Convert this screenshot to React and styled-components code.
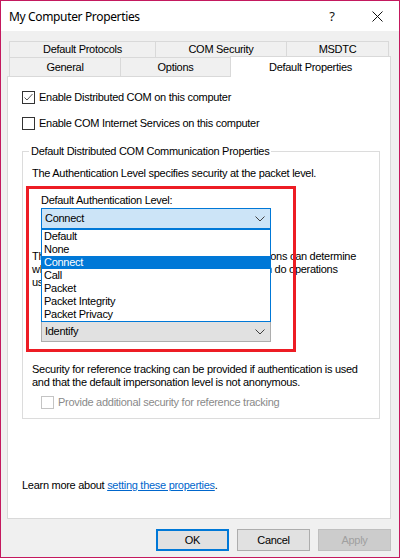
import React from "react";
import styled, { createGlobalStyle } from "styled-components";

const GlobalStyle = createGlobalStyle`
  body {
    margin: 0;
    font-family: "Liberation Sans", Arial, sans-serif;
    font-size: 11px;
    letter-spacing: -0.28px;
    color: #000;
  }
`;

const Window = styled.div`
  width: 400px;
  height: 558px;
  box-sizing: border-box;
  border: 1px solid #c4195e;
  background: #f0f0f0;
  display: flex;
  flex-direction: column;
`;

const TitleBar = styled.div`
  height: 30px;
  background: #fff;
  display: flex;
  align-items: center;
  padding-left: 8px;
  flex-shrink: 0;
`;

const Title = styled.div`
  font-family: "Noto Sans", "Open Sans", sans-serif;
  font-size: 12px;
  letter-spacing: -0.35px;
  flex: 1;
`;

const TitleButton = styled.div`
  width: ${p => p.$w}px;
  height: 30px;
  display: flex;
  align-items: center;
  justify-content: center;
  font-family: "Noto Sans", sans-serif;
  font-size: 13px;
  color: #111;
`;

const Body = styled.div`
  flex: 1;
  display: flex;
  flex-direction: column;
  padding: 10px 8px 0 6px;
`;

const TabRow = styled.div`
  display: flex;
  align-items: flex-end;
  height: ${p => p.$h}px;
  padding-left: 2px;
`;

const Tab = styled.div`
  box-sizing: border-box;
  width: ${p => p.$w}px;
  height: ${p => (p.$active ? p.$h + 2 : p.$h)}px;
  margin-left: -1px;
  margin-bottom: ${p => (p.$active ? -1 : 0)}px;
  border: 1px solid #d9d9d9;
  border-bottom: none;
  background: ${p => (p.$active ? "#fff" : "#f0f0f0")};
  display: flex;
  align-items: center;
  justify-content: center;
  line-height: 13px;
  position: relative;
  z-index: ${p => (p.$active ? 1 : 0)};
  &:first-child {
    margin-left: 0;
  }
`;

const Panel = styled.div`
  box-sizing: border-box;
  width: 384px;
  height: 443px;
  border: 1px solid #d9d9d9;
  background: #fff;
  padding: 14px 14px 0 14px;
  display: flex;
  flex-direction: column;
`;

const CheckRow = styled.label`
  display: flex;
  align-items: center;
  gap: 4px;
  height: 13px;
  line-height: 13px;
  margin-top: ${p => p.$mt || 0}px;
  margin-left: ${p => p.$ml || 0}px;
  color: ${p => (p.$disabled ? "#8a8a8a" : "#000")};
`;

const Box = styled.span`
  box-sizing: border-box;
  width: 13px;
  height: 13px;
  border: 1px solid ${p => (p.$disabled ? "#c4c4c4" : "#333")};
  background: #fff;
  display: flex;
  align-items: center;
  justify-content: center;
`;

const Group = styled.fieldset`
  box-sizing: border-box;
  width: 358px;
  margin: 15px 0 0 0;
  padding: 0 9px 9px 9px;
  border: 1px solid #dcdcdc;
  min-width: 0;
`;

const Legend = styled.legend`
  padding: 0 2px;
  margin-left: -3px;
  line-height: 13px;
`;

const Text = styled.div`
  line-height: 13px;
  margin-top: ${p => p.$mt || 0}px;
  margin-left: ${p => p.$ml || 0}px;
  white-space: nowrap;
`;

const AuthSection = styled.div`
  position: relative;
  margin-top: 14px;
`;

const Combo = styled.div`
  position: relative;
  box-sizing: border-box;
  width: 230px;
  height: 21px;
  margin-left: 9px;
  margin-top: ${p => p.$mt || 0}px;
  border: 1px solid ${p => (p.$focused ? "#0078d7" : "#adadad")};
  background: ${p => (p.$focused ? "#cce4f7" : "#e1e1e1")};
  display: flex;
  align-items: center;
  padding: 0 5px 0 3px;
  line-height: 13px;
`;

const ComboValue = styled.span`
  flex: 1;
`;

const DropList = styled.div`
  position: absolute;
  top: 20px;
  left: -1px;
  width: 230px;
  box-sizing: border-box;
  border: 1px solid #0078d7;
  background: #fff;
  z-index: 3;
`;

const Option = styled.div`
  height: 13px;
  line-height: 13px;
  padding-left: 2px;
  background: ${p => (p.$selected ? "#0078d7" : "#fff")};
  color: ${p => (p.$selected ? "#fff" : "#000")};
`;

const Highlight = styled.div`
  position: absolute;
  top: -8px;
  left: -6px;
  width: 270px;
  height: 166px;
  box-sizing: border-box;
  border: 3px solid #ed1c24;
  pointer-events: none;
  z-index: 4;
`;

const LearnMore = styled.div`
  margin-top: 60px;
  line-height: 13px;
`;

const Link = styled.a`
  color: #0066cc;
  text-decoration: underline;
`;

const ButtonRow = styled.div`
  display: flex;
  justify-content: flex-end;
  gap: 8px;
  margin-top: 10px;
`;

const Button = styled.div`
  box-sizing: border-box;
  width: 73px;
  height: 22px;
  display: flex;
  align-items: center;
  justify-content: center;
  background: ${p => (p.$disabled ? "#cccccc" : "#e1e1e1")};
  border: ${p =>
    p.$default ? "2px solid #0078d7" : p.$disabled ? "1px solid #bfbfbf" : "1px solid #adadad"};
  color: ${p => (p.$disabled ? "#a0a0a0" : "#000")};
`;

const Chevron = () => (
  <svg width="10" height="6" viewBox="0 0 10 6">
    <path d="M0.5 0.5 L5 5 L9.5 0.5" fill="none" stroke="#404040" strokeWidth="1" />
  </svg>
);

const Check = () => (
  <svg width="11" height="11" viewBox="0 0 11 11">
    <path d="M1.5 5.5 L4 8 L9.5 2" fill="none" stroke="#555" strokeWidth="1" />
  </svg>
);

const levels = ["Default", "None", "Connect", "Call", "Packet", "Packet Integrity", "Packet Privacy"];

export default function App() {
  return (
    <>
      <GlobalStyle />
      <Window>
        <TitleBar>
          <Title>My Computer Properties</Title>
          <TitleButton $w={46}>?</TitleButton>
          <TitleButton $w={44}>
            <svg width="11" height="11" viewBox="0 0 11 11">
              <path d="M0.5 0.5 L10.5 10.5 M10.5 0.5 L0.5 10.5" stroke="#111" strokeWidth="1" />
            </svg>
          </TitleButton>
        </TitleBar>
        <Body>
          <TabRow $h={16}>
            <Tab $w={147} $h={16}>Default Protocols</Tab>
            <Tab $w={132} $h={16}>COM Security</Tab>
            <Tab $w={103} $h={16}>MSDTC</Tab>
          </TabRow>
          <TabRow $h={19}>
            <Tab $w={112} $h={19}>General</Tab>
            <Tab $w={111} $h={19}>Options</Tab>
            <Tab $w={161} $h={19} $active>Default Properties</Tab>
          </TabRow>
          <Panel>
            <CheckRow>
              <Box><Check /></Box>
              Enable Distributed COM on this computer
            </CheckRow>
            <CheckRow $mt={13}>
              <Box />
              Enable COM Internet Services on this computer
            </CheckRow>
            <Group>
              <Legend>Default Distributed COM Communication Properties</Legend>
              <Text $mt={9}>The Authentication Level specifies security at the packet level.</Text>
              <AuthSection>
                <Text $ml={9}>Default Authentication Level:</Text>
                <Combo $mt={1} $focused>
                  <ComboValue>Connect</ComboValue>
                  <Chevron />
                  <DropList>
                    {levels.map(l => (
                      <Option key={l} $selected={l === "Connect"}>{l}</Option>
                    ))}
                  </DropList>
                </Combo>
                <Text $mt={21}>
                  The Impersonation Level specifies whether applications can determine
                  <br />
                  who is calling them, and whether the application can do operations
                  <br />
                  using the client's identity.
                </Text>
                <Text $mt={18} $ml={9}>Default Impersonation Level:</Text>
                <Combo $mt={1}>
                  <ComboValue>Identify</ComboValue>
                  <Chevron />
                </Combo>
                <Highlight />
              </AuthSection>
              <Text $mt={21}>
                Security for reference tracking can be provided if authentication is used
                <br />
                and that the default impersonation level is not anonymous.
              </Text>
              <CheckRow $mt={7} $ml={9} $disabled>
                <Box $disabled />
                Provide additional security for reference tracking
              </CheckRow>
            </Group>
            <LearnMore>
              Learn more about <Link href="#">setting these properties</Link>.
            </LearnMore>
          </Panel>
          <ButtonRow>
            <Button $default>OK</Button>
            <Button>Cancel</Button>
            <Button $disabled>Apply</Button>
          </ButtonRow>
        </Body>
      </Window>
    </>
  );
}
